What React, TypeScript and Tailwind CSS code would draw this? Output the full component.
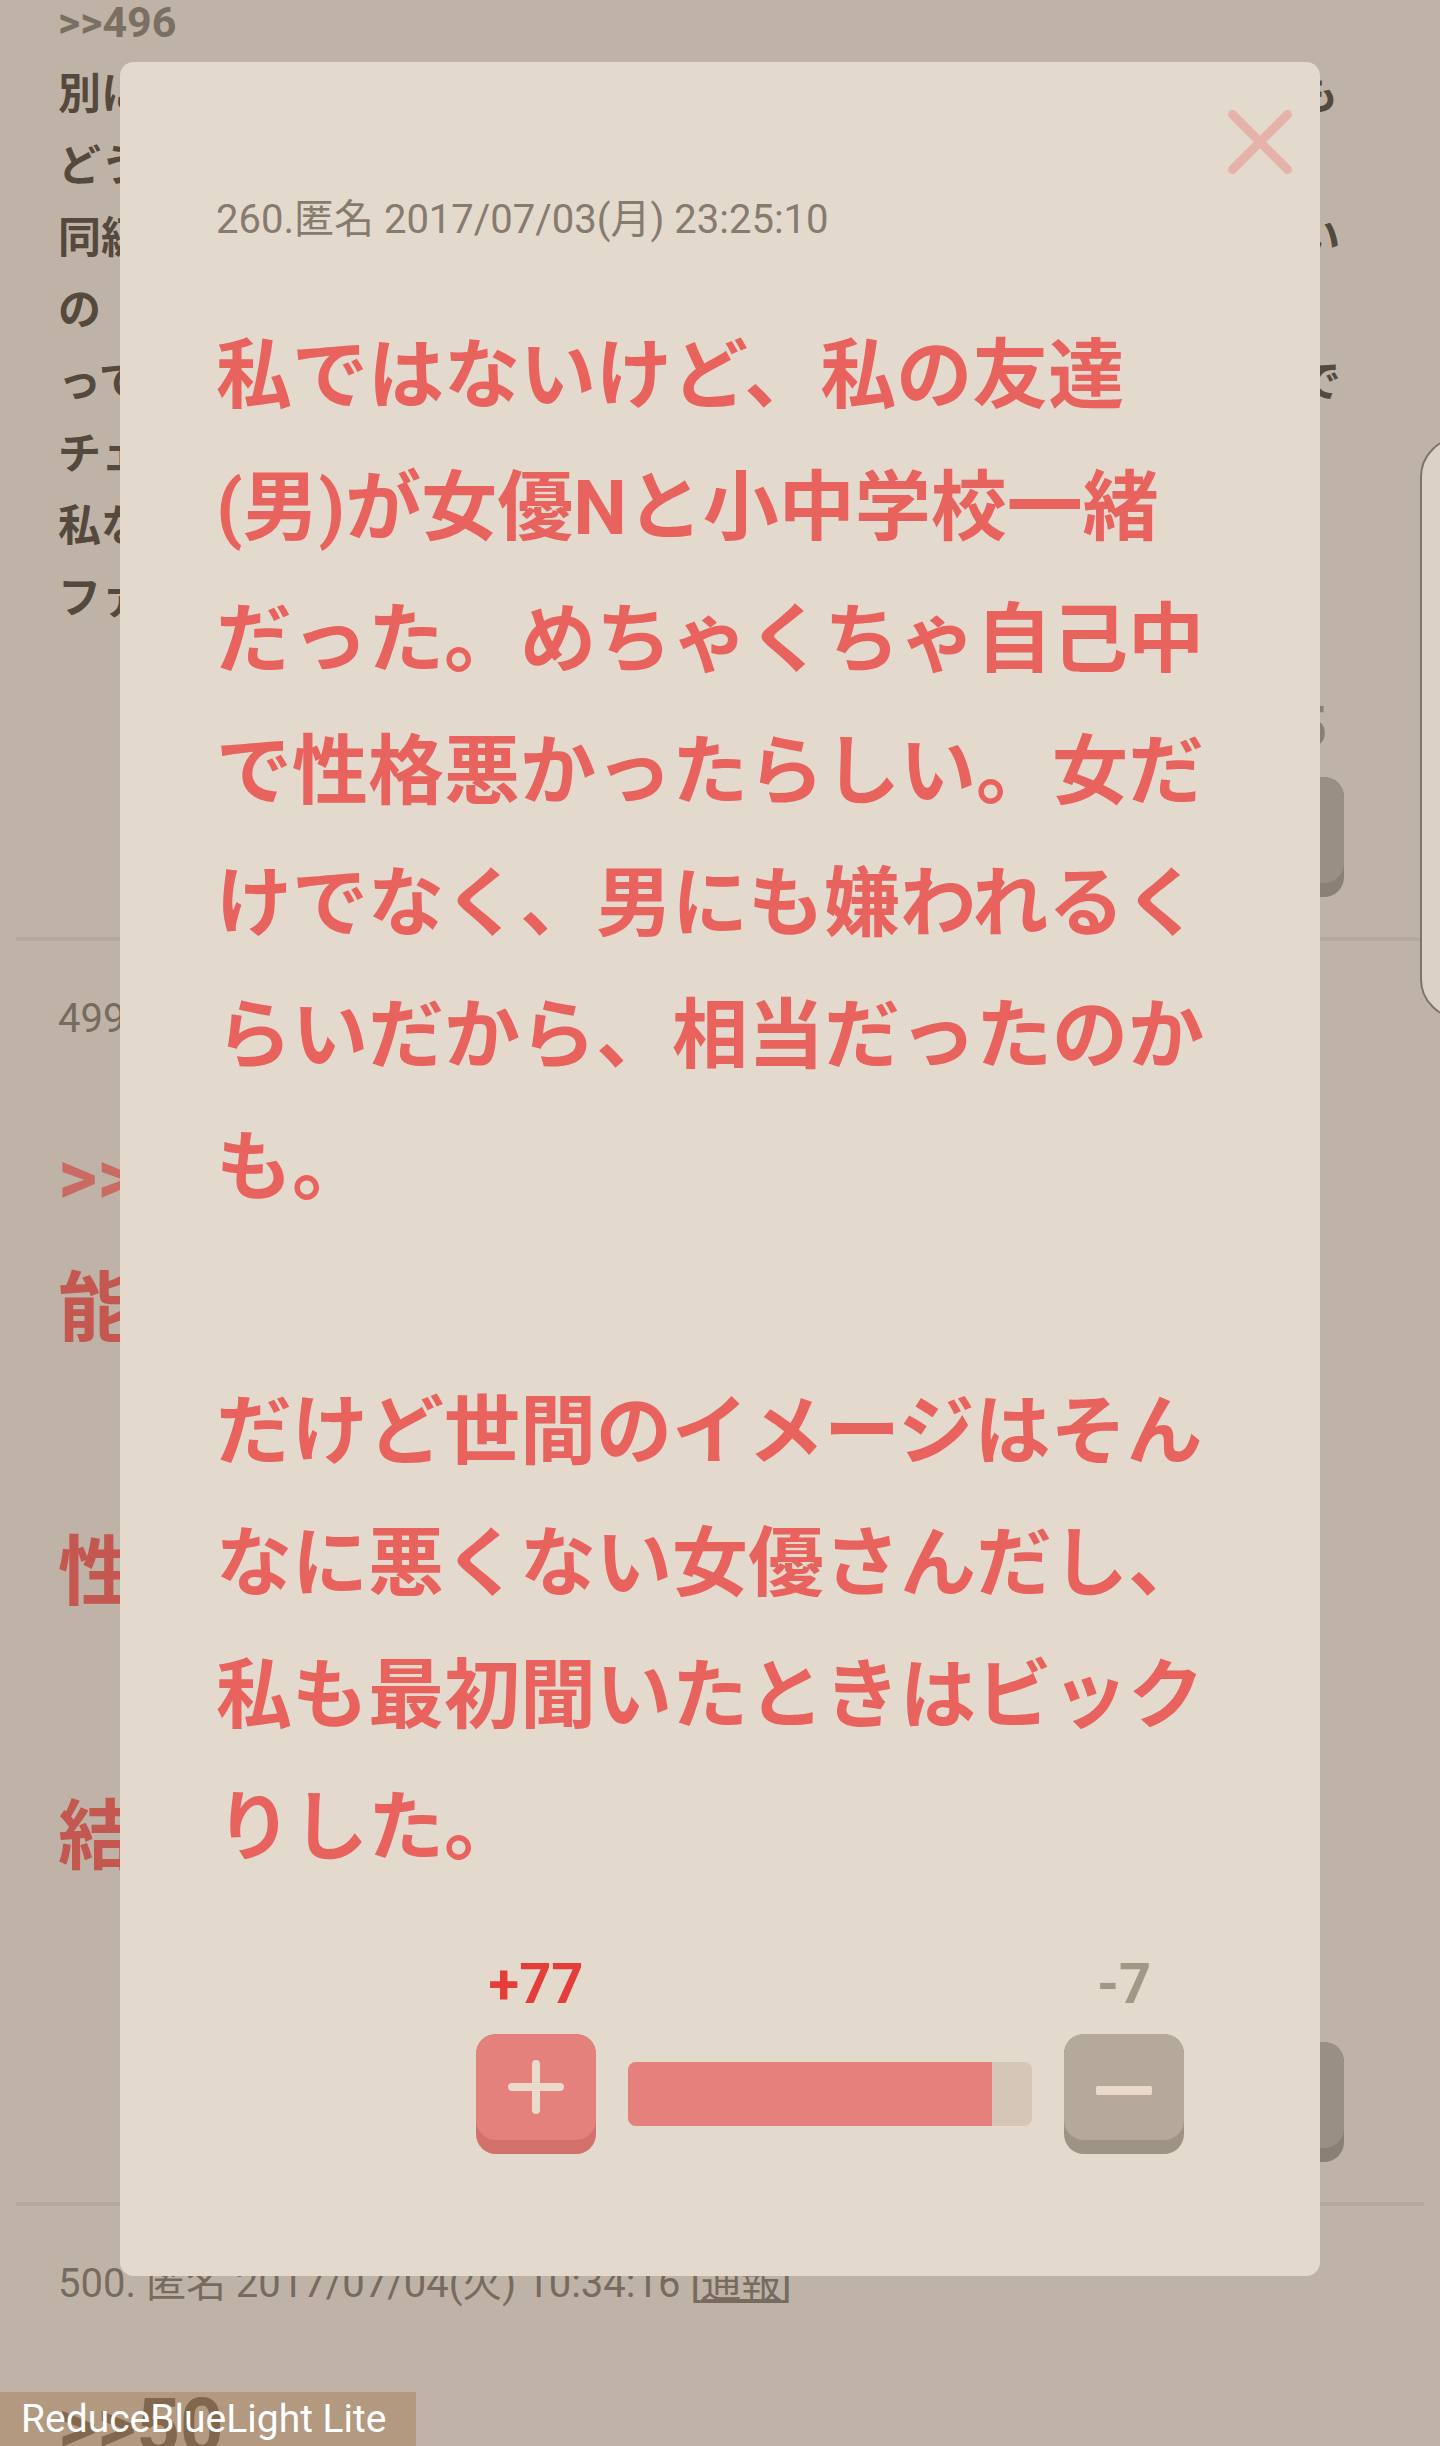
import React from "react";

const ROBOTO = "font-[family-name:Roboto,'Noto_Sans_CJK_JP',sans-serif]";

type VoteColors = {
    plus: string;
    plusBase: string;
    minus: string;
    minusBase: string;
    track: string;
    fill: string;
    up: string;
    down: string;
    glyph: string;
};

const modalColors: VoteColors = {
    plus: "bg-[#e4817c]",
    plusBase: "bg-[#d2706b]",
    minus: "bg-[#b5a99c]",
    minusBase: "bg-[#9e9385]",
    track: "bg-[#d5c6b8]",
    fill: "bg-[#e6807c]",
    up: "text-[#e53d3a]",
    down: "text-[#a39788]",
    glyph: "bg-[#eadacb]",
};

const pageColors: VoteColors = {
    plus: "bg-[#c06d68]",
    plusBase: "bg-[#b05f5a]",
    minus: "bg-[#9a8f83]",
    minusBase: "bg-[#8b8074]",
    track: "bg-[#b3a69a]",
    fill: "bg-[#c06d68]",
    up: "text-[#c0403c]",
    down: "text-[#8a7f73]",
    glyph: "bg-[#c4b8ab]",
};

function VoteRow({ up, down, fillWidth, c }: { up: string; down: string; fillWidth: number; c: VoteColors }) {
    return (
        <div className="flex items-end gap-[32px]">
            <div className="flex w-[120px] flex-col items-center">
                <div className={`h-[64px] text-[56px] leading-[64px] font-bold ${c.up}`}>{up}</div>
                <div className={`mt-[18px] h-[120px] w-[120px] overflow-hidden rounded-[20px] ${c.plusBase}`}>
                    <div className={`relative flex h-[106px] items-center justify-center rounded-[20px] ${c.plus}`}>
                        <div className={`absolute h-[8px] w-[56px] rounded-full ${c.glyph}`} />
                        <div className={`absolute h-[54px] w-[8px] rounded-full ${c.glyph}`} />
                    </div>
                </div>
            </div>
            <div className="flex h-[120px] items-center">
                <div className={`flex h-[64px] w-[404px] overflow-hidden rounded-[8px] ${c.track}`}>
                    <div className={`h-full ${c.fill}`} style={{ width: fillWidth }} />
                </div>
            </div>
            <div className="flex w-[120px] flex-col items-center">
                <div className={`h-[64px] text-[56px] leading-[64px] font-bold ${c.down}`}>{down}</div>
                <div className={`mt-[18px] h-[120px] w-[120px] overflow-hidden rounded-[20px] ${c.minusBase}`}>
                    <div className={`flex h-[106px] items-center justify-center rounded-[20px] ${c.minus}`}>
                        <div className={`mt-[6px] h-[9px] w-[56px] rounded-[2px] ${c.glyph}`} />
                    </div>
                </div>
            </div>
        </div>
    );
}

const post1 = [
    "別に女優だからって皆が性格いいなんて思ってないけど、それでも",
    "どうしてそこまで嫌われてたのかは気になる。",
    "同級生だったっていう人の話って、どこまで本当なのかわからない",
    "の",
    "ってそういう話を聞くと、ちょっとファンとしては複雑な気持ちで",
    "チェックしてた作品も見方が変わっちゃう。",
    "私なら気にしないけどね。",
    "ファンの人はショックかも。",
];

const post2 = ["能力と性格は別だよね", "\u00a0", "性格悪くても売れてる人多いし", "\u00a0", "結局は顔と実力"];

const modalLines = [
    "私ではないけど、私の友達",
    "(男)が女優Nと小中学校一緒",
    "だった。めちゃくちゃ自己中",
    "で性格悪かったらしい。女だ",
    "けでなく、男にも嫌われるく",
    "らいだから、相当だったのか",
    "も。",
    "\u00a0",
    "だけど世間のイメージはそん",
    "なに悪くない女優さんだし、",
    "私も最初聞いたときはビック",
    "りした。",
];

export default function App() {
    return (
        <div className={`relative h-[2446px] w-[1440px] overflow-hidden bg-[#bfb3a7] ${ROBOTO}`}>
            {/* page behind the dialog */}
            <div className="flex flex-col px-[16px]">
                {/* post 497 (scrolled) */}
                <div className="-mt-[14px] flex flex-col pl-[42px] pr-[80px]">
                    <div className="whitespace-nowrap text-[43px] leading-[72px] font-bold text-[#55493e]">
                        <div className="text-[#7b6f63]">&gt;&gt;496</div>
                        {post1.map((l, i) => (
                            <div key={i}>{l}</div>
                        ))}
                    </div>
                    <div className="mt-[61px] flex justify-end">
                        <VoteRow up="+52" down="-15" fillWidth={320} c={pageColors} />
                    </div>
                </div>
                <div className="mt-[40px] h-[4px] bg-[#b5a99d]" />

                {/* post 499 */}
                <div className="flex flex-col pl-[42px] pr-[80px]">
                    <div className="mt-[54px] whitespace-nowrap text-[40px] leading-[48px] text-[#776b5f]">
                        499. 匿名 2017/07/04(火) 10:12:55 [<span className="underline">通報</span>]
                    </div>
                    <div className="mt-[68px] whitespace-nowrap text-[76px] leading-[132px] font-bold text-[#c4574f]">
                        <div className="text-[#ca6b63]">&gt;&gt;498</div>
                        {post2.map((l, i) => (
                            <div key={i}>{l}</div>
                        ))}
                    </div>
                    <div className="mt-[57px] flex justify-end">
                        <VoteRow up="+64" down="-9" fillWidth={340} c={pageColors} />
                    </div>
                </div>
                <div className="mt-[40px] h-[4px] bg-[#b5a99d]" />

                {/* post 500 */}
                <div className="flex flex-col pl-[42px] pr-[80px]">
                    <div className="mt-[54px] whitespace-nowrap text-[40px] leading-[48px] text-[#776b5f]">
                        500. 匿名 2017/07/04(火) 10:34:16 [<span className="underline">通報</span>]
                    </div>
                    <div className="mt-[52px] whitespace-nowrap text-[76px] leading-[132px] font-bold text-[#7b6f63]">
                        &gt;&gt;50
                    </div>
                </div>
            </div>

            {/* edge of a side panel peeking in */}
            <div className="absolute left-[1420px] top-[437px] h-[582px] w-[80px] rounded-l-[40px] border-2 border-[#7f7468] bg-[#dcd1c5]" />

            {/* dialog */}
            <div className="absolute left-[120px] top-[62px] w-[1200px] rounded-[14px] bg-[#e4d9cd] pb-[122px] pl-[96px] pt-[134px]">
                <svg className="absolute left-[1108px] top-[48px]" width="64" height="64" viewBox="0 0 64 64">
                    <path d="M4.5 4.5 L59.5 59.5 M59.5 4.5 L4.5 59.5" stroke="#e6b3ab" strokeWidth="9" strokeLinecap="round" />
                </svg>
                <div className="whitespace-nowrap text-[40px] leading-[48px] text-[#877b6f]">
                    260.匿名 2017/07/03(月) 23:25:10
                </div>
                <div className="mt-[66px] whitespace-nowrap text-[76px] leading-[132px] font-bold text-[#e8625e]">
                    {modalLines.map((l, i) => (
                        <div key={i}>{l}</div>
                    ))}
                </div>
                <div className="mt-[58px] pl-[260px]">
                    <VoteRow up="+77" down="-7" fillWidth={364} c={modalColors} />
                </div>
            </div>

            {/* screen filter app badge */}
            <div className="absolute bottom-0 left-0 flex h-[54px] w-[416px] items-center bg-[rgba(145,83,17,0.26)] pl-[21px] text-[39px] leading-[54px] text-white">
                ReduceBlueLight Lite
            </div>
        </div>
    );
}
